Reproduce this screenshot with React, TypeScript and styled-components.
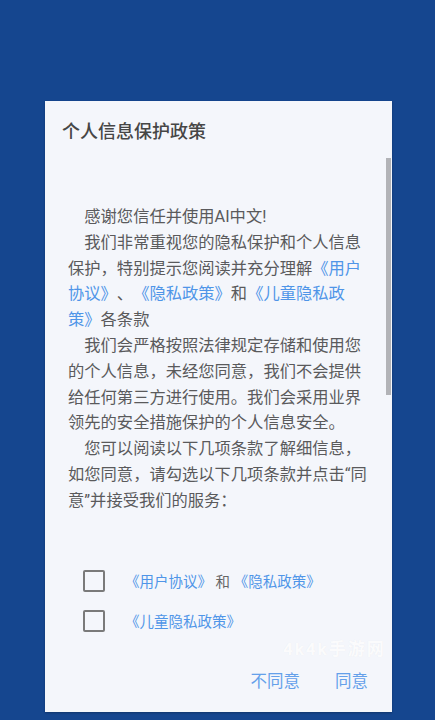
import React from "react";
import styled, { createGlobalStyle } from "styled-components";

const Global = createGlobalStyle`
  html, body {
    margin: 0;
    padding: 0;
    background: #15468f;
  }
  * {
    box-sizing: border-box;
    text-spacing-trim: space-all;
  }
`;

const FONT = `Roboto, "Noto Sans CJK SC", "Noto Sans", sans-serif`;

const Screen = styled.div`
  width: 435px;
  height: 720px;
  background: #15468f;
  padding: 101px 0 0 45px;
  font-family: ${FONT};
  overflow: hidden;
`;

const Dialog = styled.div`
  position: relative;
  width: 347px;
  height: 611px;
  background: #f4f6fb;
  display: flex;
  flex-direction: column;
  box-shadow: 0 1px 2px rgba(0, 0, 0, 0.25);
`;

const Title = styled.h1`
  margin: 19px 0 0 17px;
  font-size: 18px;
  line-height: 24px;
  font-weight: 500;
  color: #464646;
`;

const Body = styled.div`
  margin: 60px 0 0 23px;
  width: 303px;
  font-size: 16.3px;
  line-height: 25.8px;
  color: #5a5a5c;
`;

const Para = styled.p`
  margin: 0;
  text-indent: 1em;
`;

const Link = styled.span`
  color: #4f95e8;
`;

const Options = styled.div`
  margin: 47px 0 0 38px;
  display: flex;
  flex-direction: column;
`;

const OptionRow = styled.label`
  height: 40px;
  display: flex;
  align-items: center;
  font-size: 14.5px;
  color: #666;
`;

const Box = styled.span`
  width: 22px;
  height: 22px;
  border: 2px solid #7a7a7a;
  border-radius: 2px;
  flex: none;
  margin-right: 20px;
`;

const Actions = styled.div`
  margin-top: 29px;
  display: flex;
  justify-content: flex-end;
  gap: 35px;
  padding-right: 24px;
`;

const ActionButton = styled.button`
  border: none;
  background: none;
  padding: 0;
  font-family: ${FONT};
  font-size: 16.5px;
  line-height: 24px;
  color: #64a0ea;
`;

const ScrollThumb = styled.div`
  position: absolute;
  left: 341px;
  top: 57px;
  width: 5px;
  height: 237px;
  background: #b2b3b7;
`;

const Watermark = styled.div`
  position: absolute;
  left: 238px;
  top: 534px;
  font-size: 17px;
  letter-spacing: 2px;
  font-weight: 700;
  color: rgba(255, 255, 255, 0.85);
  text-shadow: 0 0 1px rgba(0, 0, 0, 0.06);
  pointer-events: none;
`;

export default function App() {
  return (
    <>
      <Global />
      <Screen>
        <Dialog>
          <Title>个人信息保护政策</Title>
          <Body>
            <Para>感谢您信任并使用AI中文!</Para>
            <Para>
              我们非常重视您的隐私保护和个人信息保护，特别提示您阅读并充分理解
              <Link>《用户协议》</Link>、<Link>《隐私政策》</Link>和
              <Link>《儿童隐私政策》</Link>各条款
            </Para>
            <Para>
              我们会严格按照法律规定存储和使用您的个人信息，未经您同意，我们不会提供给任何第三方进行使用。我们会采用业界领先的安全措施保护的个人信息安全。
            </Para>
            <Para>
              您可以阅读以下几项条款了解细信息，如您同意，请勾选以下几项条款并点击“同意”并接受我们的服务：
            </Para>
          </Body>
          <Options>
            <OptionRow>
              <Box />
              <span>
                <Link>《用户协议》</Link> 和 <Link>《隐私政策》</Link>
              </span>
            </OptionRow>
            <OptionRow>
              <Box />
              <Link>《儿童隐私政策》</Link>
            </OptionRow>
          </Options>
          <Actions>
            <ActionButton>不同意</ActionButton>
            <ActionButton>同意</ActionButton>
          </Actions>
          <ScrollThumb />
          <Watermark>4k4k手游网</Watermark>
        </Dialog>
      </Screen>
    </>
  );
}
